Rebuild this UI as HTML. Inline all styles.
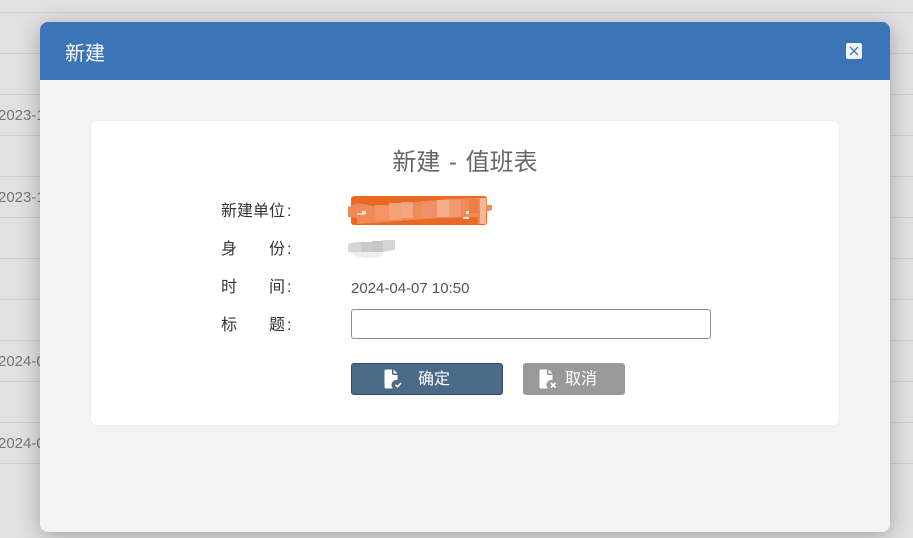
<!DOCTYPE html>
<html lang="zh">
<head>
<meta charset="utf-8">
<title>新建</title>
<style>
html,body{margin:0;padding:0;width:913px;height:538px;overflow:hidden;background:#e1e1e1;font-family:"Liberation Sans","Noto Sans CJK SC",sans-serif;}
.abs{position:absolute;}
.line{position:absolute;left:0;width:913px;height:1px;background:#cfcfcf;}
.bgt{position:absolute;left:-2px;font-size:15px;line-height:16px;color:#777;white-space:nowrap;}
.modal{position:absolute;left:40px;top:22px;width:850px;height:510px;background:#f3f3f3;border-radius:8px;box-shadow:0 4px 22px rgba(0,0,0,.28);overflow:hidden;}
.head{position:absolute;left:0;top:0;width:850px;height:58px;background:#3b74b7;}
.head span{position:absolute;left:25px;top:17px;font-size:20px;line-height:28px;color:#fff;}
.close{position:absolute;left:806px;top:21px;width:16px;height:16px;background:#f0f4fa;border-radius:2px;}
.card{position:absolute;left:91px;top:121px;width:748px;height:304px;background:#fff;border-radius:6px;box-shadow:0 0 2px rgba(0,0,0,.06);}
.title{position:absolute;left:0;top:147px;width:930px;text-align:center;font-size:24px;line-height:32px;color:#666;word-spacing:2px;}
.lb{position:absolute;left:221px;font-size:16px;line-height:20px;color:#333;white-space:nowrap;}
.lb i{font-style:normal;position:absolute;left:48px;top:0;}
.lb b{font-weight:normal;position:absolute;left:66px;top:0;}
.val{position:absolute;left:351px;top:280px;font-size:15px;line-height:18px;color:#555;white-space:nowrap;}
.input{position:absolute;left:351px;top:309px;width:358px;height:28px;background:#fff;border:1px solid #8a8a8a;border-radius:3px;}
.btn{position:absolute;top:363px;height:32px;border-radius:3px;color:#fff;font-size:16px;line-height:32px;}
.ok{left:351px;width:150px;height:30px;line-height:30px;background:#4b6a88;border:1px solid #2f4b66;}
.cancel{left:523px;width:102px;background:#999;}
</style>
</head>
<body>
<div class="line" style="top:12px"></div>
<div class="line" style="top:53px"></div>
<div class="line" style="top:94px"></div>
<div class="line" style="top:135px"></div>
<div class="line" style="top:176px"></div>
<div class="line" style="top:217px"></div>
<div class="line" style="top:258px"></div>
<div class="line" style="top:299px"></div>
<div class="line" style="top:340px"></div>
<div class="line" style="top:381px"></div>
<div class="line" style="top:422px"></div>
<div class="line" style="top:463px"></div>
<div class="bgt" style="top:108px">2023-11</div>
<div class="bgt" style="top:190px">2023-11</div>
<div class="bgt" style="top:354px">2024-01</div>
<div class="bgt" style="top:436px">2024-01</div>

<div class="modal">
  <div class="head"><span style="top:18px">新建</span>
    <div class="close">
      <svg width="16" height="16" viewBox="0 0 16 16"><path d="M4 4L12 12M12 4L4 12" stroke="#4a78b0" stroke-width="1.3" fill="none"/></svg>
    </div>
  </div>
</div>
<div class="card"></div>
<div class="title">新建 - 值班表</div>

<div class="lb" style="top:202px">新建单位<b>:</b></div>
<div class="lb" style="top:240px">身<i>份</i><b>:</b></div>
<div class="lb" style="top:278px">时<i>间</i><b>:</b></div>
<div class="lb" style="top:316px">标<i>题</i><b>:</b></div>

<svg class="abs" style="left:345px;top:192px" width="150" height="70" viewBox="0 0 150 70">
  <rect x="6" y="4" width="136" height="29" rx="3" fill="#e96a25"/>
  <path d="M3 15L13 11L38 16L70 10L102 7L135 6L142 6V13H147V18L140 20V32H133V25L95 26L52 29L28 31L12 32V26L3 25Z" fill="#f08a58"/>
  <rect x="30" y="13" width="14" height="15" fill="#f29468"/>
  <rect x="44" y="11" width="12" height="17" fill="#f3a27a"/>
  <rect x="56" y="10" width="12" height="16" fill="#f5a680"/>
  <rect x="76" y="9" width="16" height="17" fill="#ef9068"/>
  <rect x="92" y="8" width="12" height="17" fill="#f6ae8a"/>
  <rect x="104" y="8" width="12" height="17" fill="#f29a72"/>
  <rect x="124" y="7" width="9" height="14" fill="#ec7f48"/>
  <rect x="135" y="6" width="6" height="26" fill="#f6b899"/>
  <rect x="12" y="21" width="8" height="2" fill="#f9c8ae"/>
  <rect x="17" y="19" width="4" height="3" fill="#fbe3d6"/>
  <rect x="121" y="19" width="3" height="3" fill="#fbe3d6"/>
  <rect x="118" y="25" width="6" height="2" fill="#fbe3d6"/>
  <path d="M3 52L12 50H30L40 48H50V58L37 60H3Z" fill="#d6d6d6"/>
  <rect x="16" y="50" width="11" height="10" fill="#cbcbcb"/>
  <rect x="27" y="49" width="11" height="11" fill="#c6c6c6"/>
  <path d="M5 60H38L36 65L22 66L10 64Z" fill="#eeeeee"/>
</svg>

<div class="val">2024-04-07 10:50</div>
<div class="input"></div>

<div class="btn ok">
  <svg class="abs" style="left:32px;top:5px" width="20" height="20" viewBox="0 0 20 20">
    <path d="M.5 2Q.5 .5 2 .5H8V4.5Q8 6 9.5 6H13.5V11A5 5 0 0 0 9 19.5H2Q.5 19.5 .5 18Z" fill="#fff"/>
    <path d="M9.5 .5L13.5 4.5H9.5Z" fill="#fff"/>
    <path d="M11.5 15.8L13.5 17.8L17 14" stroke="#fff" stroke-width="1.5" fill="none"/>
  </svg>
  <span class="abs" style="left:66px;top:1px">确定</span>
</div>
<div class="btn cancel">
  <svg class="abs" style="left:16px;top:6px" width="20" height="20" viewBox="0 0 20 20">
    <path d="M.5 2Q.5 .5 2 .5H8V4.5Q8 6 9.5 6H13.5V11A5 5 0 0 0 9 19.5H2Q.5 19.5 .5 18Z" fill="#fff"/>
    <path d="M9.5 .5L13.5 4.5H9.5Z" fill="#fff"/>
    <path d="M12 14L16.5 18.5M16.5 14L12 18.5" stroke="#fff" stroke-width="1.7" fill="none"/>
  </svg>
  <span class="abs" style="left:42px;top:1px">取消</span>
</div>
</body>
</html>
